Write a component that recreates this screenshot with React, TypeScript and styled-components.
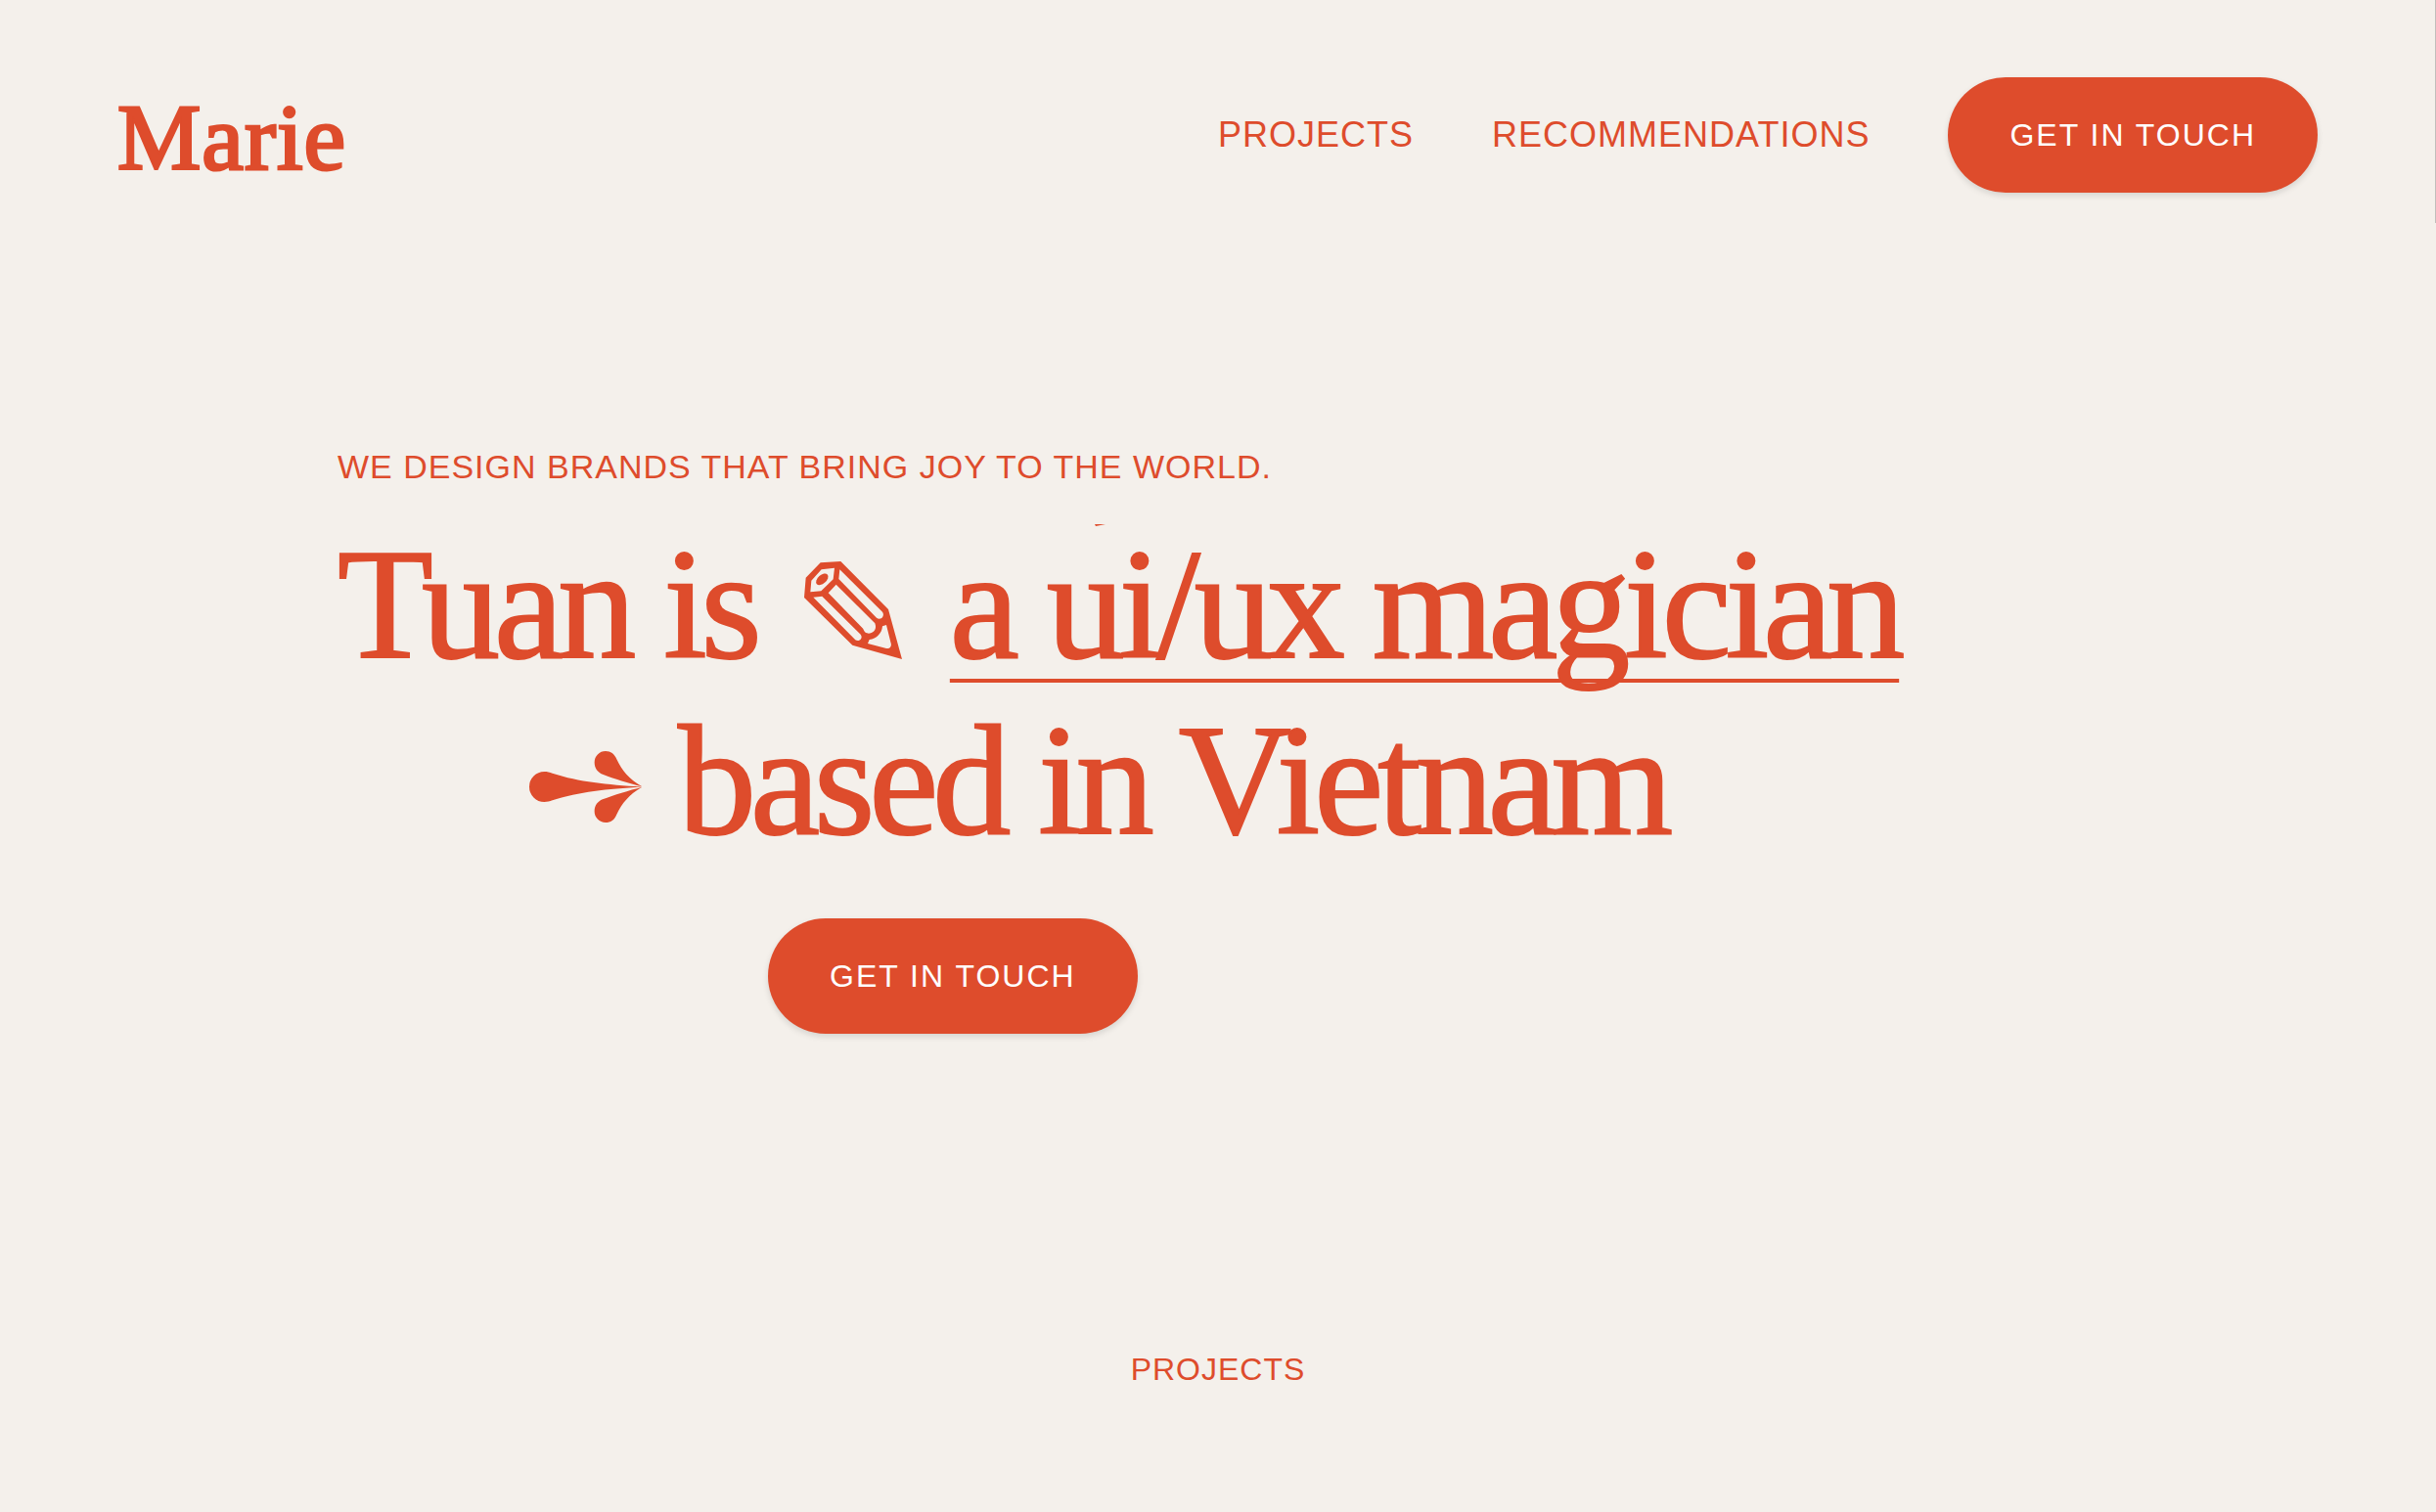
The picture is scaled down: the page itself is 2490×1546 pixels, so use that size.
import React from "react";
import styled, { createGlobalStyle } from "styled-components";

const accent = "#de4c2c";
const paper = "#f4f0eb";
const sans = `"Liberation Sans", Arial, sans-serif`;
const serif = `"Liberation Serif", "Times New Roman", serif`;

const GlobalStyle = createGlobalStyle`
  *, *::before, *::after { box-sizing: border-box; }
  body {
    margin: 0;
    background: ${paper};
    color: ${accent};
    font-family: ${sans};
  }
`;

const Page = styled.div`
  position: relative;
  min-height: 100vh;
  overflow: hidden;
`;

const ScrollThumb = styled.div`
  position: absolute;
  top: 0;
  right: 0;
  width: 1px;
  height: 228px;
  background: #c1bebb;
`;

const Header = styled.header`
  display: flex;
  align-items: center;
  justify-content: space-between;
  padding: 79px 121px 0 120px;
`;

const Logo = styled.a`
  padding-top: 6px;
  color: inherit;
  text-decoration: none;
  font-family: ${serif};
  font-size: 96px;
  line-height: 112px;
  letter-spacing: 1px;
  -webkit-text-stroke: 3px ${accent};
  paint-order: stroke fill;
`;

const Nav = styled.nav`
  display: flex;
  align-items: center;
  gap: 80px;
`;

const NavLink = styled.a`
  color: inherit;
  text-decoration: none;
  font-size: 36px;
  line-height: 48px;
  letter-spacing: 1px;
`;

const PillButton = styled.button`
  height: 118px;
  padding: 0 63px;
  border: 0;
  border-radius: 59px;
  background: ${accent};
  color: #fff;
  font-family: ${sans};
  font-size: 32px;
  line-height: 48px;
  letter-spacing: 2px;
  white-space: nowrap;
  box-shadow: 0 3px 6px rgba(0, 0, 0, 0.12);
  cursor: pointer;
`;

const Hero = styled.section`
  max-width: 1800px;
  margin: 0 auto;
  padding-top: 256px;
`;

const Eyebrow = styled.p`
  margin: 0 0 27px;
  font-size: 34px;
  line-height: 48px;
  letter-spacing: 1px;
`;

const Headline = styled.h1`
  position: relative;
  margin: 0;
  font-family: ${serif};
  font-size: 160px;
  font-weight: 400;
  line-height: 180px;
  letter-spacing: -6px;
  -webkit-text-stroke: 2px ${accent};
`;

const Line = styled.span<{ $gap: number; $indent?: number }>`
  display: flex;
  align-items: center;
  gap: ${(p) => p.$gap}px;
  padding-left: ${(p) => p.$indent ?? 0}px;
  white-space: nowrap;
`;

const Rotating = styled.span`
  text-decoration: underline;
  text-decoration-thickness: 4px;
  text-underline-offset: 22px;
  text-decoration-skip-ink: none;
`;

const OutgoingTip = styled.svg`
  position: absolute;
  top: 8px;
  left: 774px;
`;

const Glyph = styled.svg`
  flex: none;
  margin-top: 12px;
  fill: ${accent};
  stroke: none;
`;

const Action = styled.div`
  padding: 51px 0 0 440px;
`;

const Projects = styled.section`
  padding: 319px 0 100px;
`;

const SectionTitle = styled.h2`
  margin: 0;
  text-align: center;
  font-size: 32px;
  font-weight: 400;
  line-height: 48px;
  letter-spacing: 1px;
`;

const Pencil = () => (
  <Glyph width="100" height="100" viewBox="81 72 300 300" aria-hidden="true">
    <path
      fillRule="evenodd"
      d="M131 76L193 72L339 219L381 372L229 329L81 183L86 122Z
         M134 97L103 131L100 166L133 163L170 127L174 92Z
         M190 97L187 126L303 245C315 255 330 239 321 227Z
         M179 143L155 169L260 277C266 283 263 292 279 293C297 292 304 278 298 262Z
         M109 182L238 313C249 320 263 308 254 296L136 179Z
         M333 267L321 271C319 293 303 310 281 312L276 324L333 339C343 341 350 333 347 323Z"
    />
    <ellipse cx="136" cy="127" rx="22" ry="13" transform="rotate(-42 136 127)" />
  </Glyph>
);

const Arrow = () => (
  <Glyph width="116" height="73" viewBox="65 105 348 219" aria-hidden="true">
    <path d="M111 168C120 168 128 170 136 173C220 200 300 207 411 214.500C300 222 220 229 136 256C128 259 120 261 111 261A46 46.500 0 0 1 111 168Z" />
    <path d="M299 105A34 34 0 0 0 265 140C265 157 275 170 290 176C325 190 370 203 411 214C370 190 350 165 333 130C326 113 315 105 299 105Z" />
    <path d="M299 324A34 34 0 0 1 265 289C265 272 275 259 290 253C325 239 370 226 411 215C370 239 350 264 333 299C326 316 315 324 299 324Z" />
  </Glyph>
);

export default function App() {
  return (
    <Page>
      <GlobalStyle />
      <Header>
        <Logo href="#">Marie</Logo>
        <Nav>
          <NavLink href="#projects">PROJECTS</NavLink>
          <NavLink href="#recommendations">RECOMMENDATIONS</NavLink>
          <PillButton type="button">GET IN TOUCH</PillButton>
        </Nav>
      </Header>
      <main>
        <Hero>
          <Eyebrow>WE DESIGN BRANDS THAT BRING JOY TO THE WORLD.</Eyebrow>
          <Headline>
            <Line $gap={49}>
              <span>Tuan is</span>
              <Pencil />
              <Rotating>a ui/ux magician</Rotating>
            </Line>
            <Line $gap={36} $indent={196}>
              <Arrow />
              <span>based in Vietnam</span>
            </Line>
            <OutgoingTip width="11" height="2" viewBox="0 0 11 2" aria-hidden="true">
              <path d="M0 0H11L1 2Z" fill={accent} />
            </OutgoingTip>
          </Headline>
          <Action>
            <PillButton type="button">GET IN TOUCH</PillButton>
          </Action>
        </Hero>
        <Projects id="projects">
          <SectionTitle>PROJECTS</SectionTitle>
        </Projects>
      </main>
      <ScrollThumb />
    </Page>
  );
}
